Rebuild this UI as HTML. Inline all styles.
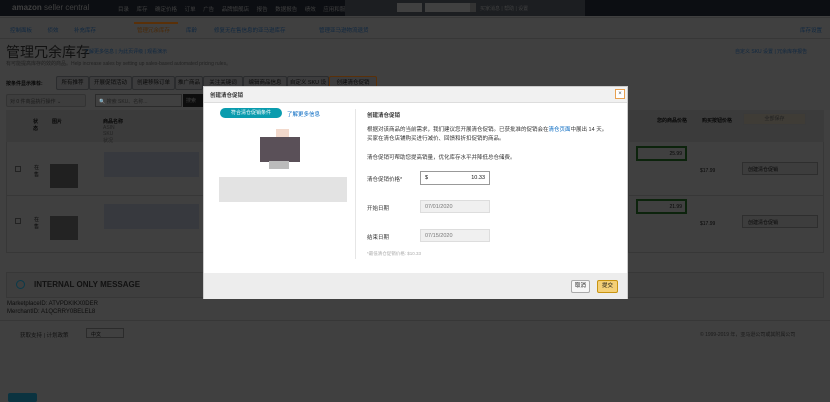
<!DOCTYPE html>
<html><head><meta charset="utf-8"><style>
*{margin:0;padding:0;box-sizing:border-box}
body{width:830px;height:402px;overflow:hidden;position:relative;background:#404040;font-family:"Liberation Sans","Noto Sans CJK SC",sans-serif;font-size:6px;color:#060606}
.a{position:absolute}
.btn{position:absolute;top:76px;height:14px;border:1px solid #2b2c2e;background:#3c3c3d;border-radius:2px;font-size:5.5px;line-height:12px;text-align:center;color:#0a0a0a}
.m{position:absolute;left:203px;top:86px;width:425px;height:213px;background:#fff;border:1px solid #ccc;color:#111}
.lnk{color:#0066c0}
.dl{color:#0e2740}
</style></head><body>
<div class="a" style="left:0;top:0;width:830px;height:16px;background:#0c0e12"></div>
<div class="a" style="left:12px;top:3px;font-size:8px;color:#404040;font-weight:bold">amazon <span style="font-weight:normal">seller central</span></div>
<div class="a" style="left:118px;top:5px;font-size:5.5px;color:#404040;word-spacing:6px">目录 库存 确定价格 订单 广告 品牌旗舰店 报告 数据报告 绩效 应用和服务 B2B</div>
<div class="a" style="left:345px;top:0;width:240px;height:16px;background:#1c1e21"></div>
<div class="a" style="left:397px;top:3px;width:25px;height:9px;background:#404040"></div>
<div class="a" style="left:425px;top:3px;width:45px;height:9px;background:#404040"></div>
<div class="a" style="left:470px;top:3px;width:6px;height:9px;background:#333"></div>
<div class="a" style="left:480px;top:5px;font-size:5px;color:#404040">买家消息 | 帮助 | 设置</div>
<div class="a" style="left:0;top:17px;width:830px;height:1px;background:#373737"></div>
<div class="a dl" style="left:10px;top:26px;font-size:5.5px;word-spacing:14px">控制面板 侦效 补充库存</div>
<div class="a" style="left:134px;top:22px;width:44px;height:14px;border-top:2px solid #5a3008;background:#404040"></div>
<div class="a" style="left:137px;top:26px;font-size:5.5px;color:#4a2806">管理冗余库存</div>
<div class="a dl" style="left:186px;top:26px;font-size:5.5px">库龄</div>
<div class="a dl" style="left:214px;top:26px;font-size:5.5px">修复无在售信息的亚马逊库存</div>
<div class="a dl" style="left:319px;top:26px;font-size:5.5px">管理亚马逊物流退货</div>
<div class="a dl" style="left:800px;top:26px;font-size:5.5px">库存设置</div>
<div class="a" style="left:0;top:38px;width:830px;height:1px;background:#373737"></div>
<div class="a" style="left:6px;top:42px;font-size:14px;color:#111">管理冗余库存</div>
<div class="a dl" style="left:84px;top:48px;font-size:5px">了解更多信息 | 为此页评级 | 观看演示</div>
<div class="a" style="left:6px;top:60px;font-size:5px;color:#222">有可能提高库存的效的商品。Help increase sales by setting up sales-based automated pricing rules。</div>
<div class="a dl" style="left:735px;top:48px;font-size:5px">自定义 SKU 设置 | 冗余库存报告</div>
<div class="a" style="left:6px;top:80px;font-size:5px;font-weight:bold">按条件显示推荐:</div>
<div class="btn" style="left:56px;width:33px">所有推荐</div>
<div class="btn" style="left:89px;width:43px">开展促销活动</div>
<div class="btn" style="left:132px;width:43px">创建移除订单</div>
<div class="btn" style="left:175px;width:28px">推广商品</div>
<div class="btn" style="left:203px;width:40px">关注关键词</div>
<div class="btn" style="left:243px;width:44px">编辑商品信息</div>
<div class="btn" style="left:287px;width:42px">自定义 SKU 设置</div>
<div class="btn" style="left:329px;width:48px;border:1px solid #5a3008">创建清仓促销</div>
<div class="a" style="left:6px;top:94px;width:80px;height:13px;border:1px solid #333;border-radius:2px;background:#3d3d3d;font-size:5px;padding:3px;color:#1a1a1a">对 0 件商品执行操作 ⌄</div>
<div class="a" style="left:95px;top:94px;width:87px;height:13px;border:1px solid #2b2b2b;font-size:5px;color:#222;padding:3px">🔍 搜索 SKU、名称...</div>
<div class="a" style="left:183px;top:94px;width:20px;height:13px;background:#0d0d0d;color:#404040;font-size:5px;padding:3px">搜索</div>
<div class="a" style="left:6px;top:110px;width:198px;height:143px;border:1px solid #373737"></div>
<div class="a" style="left:628px;top:110px;width:196px;height:143px;border:1px solid #373737"></div>
<div class="a" style="left:6px;top:110px;width:818px;height:32px;background:#3b3b3b"></div>
<div class="a" style="left:33px;top:118px;font-size:5px;font-weight:bold">状<br>态</div>
<div class="a" style="left:52px;top:118px;font-size:5px;font-weight:bold">图片</div>
<div class="a" style="left:103px;top:118px;font-size:5px;font-weight:bold">商品名称<br><span style="font-weight:normal;color:#222">ASIN<br>SKU<br>状况</span></div>
<div class="a" style="left:653px;top:117px;font-size:5px;font-weight:bold;text-align:right;width:34px">您的商品价格</div>
<div class="a" style="left:700px;top:117px;font-size:5px;font-weight:bold;width:32px;text-align:right">购买按钮价格</div>
<div class="a" style="left:743px;top:113px;width:63px;height:12px;background:#3f3c36;border:1px solid #3a3a3a;font-size:5px;text-align:center;line-height:10px;color:#222">全部保存</div>
<div class="a" style="left:6px;top:195px;width:818px;height:1px;background:#373737"></div>
<div class="a" style="left:15px;top:166px;width:6px;height:6px;border:1px solid #222"></div>
<div class="a" style="left:15px;top:218px;width:6px;height:6px;border:1px solid #222"></div>
<div class="a" style="left:34px;top:164px;font-size:5px">在<br>售</div>
<div class="a" style="left:34px;top:216px;font-size:5px">在<br>售</div>
<div class="a" style="left:50px;top:164px;width:28px;height:24px;background:#202020"></div>
<div class="a" style="left:50px;top:216px;width:28px;height:24px;background:#232323"></div>
<div class="a" style="left:104px;top:152px;width:95px;height:25px;background:#37393e"></div>
<div class="a" style="left:104px;top:204px;width:95px;height:25px;background:#37393e"></div>
<div class="a" style="left:636px;top:146px;width:51px;height:15px;border:2px solid #0c230c;font-size:5px;padding:3px;text-align:right">25.99</div>
<div class="a" style="left:636px;top:199px;width:51px;height:15px;border:2px solid #0c230c;font-size:5px;padding:3px;text-align:right">21.99</div>
<div class="a" style="left:742px;top:162px;width:76px;height:13px;border:1px solid #2e2e2e;background:#3d3d3d;font-size:5px;padding:3px 5px">创建清仓促销</div>
<div class="a" style="left:742px;top:215px;width:76px;height:13px;border:1px solid #2e2e2e;background:#3d3d3d;font-size:5px;padding:3px 5px">创建清仓促销</div>
<div class="a" style="left:700px;top:168px;font-size:5px">$17.99</div>
<div class="a" style="left:700px;top:221px;font-size:5px">$17.99</div>
<div class="a" style="left:6px;top:272px;width:818px;height:26px;border:1px solid #373737;background:#3e3e3e"></div>
<div class="a" style="left:16px;top:280px;width:9px;height:9px;border:1px solid #0a3a4a;border-radius:50%"></div>
<div class="a" style="left:34px;top:280px;font-size:8px;font-weight:bold;color:#111">INTERNAL ONLY MESSAGE</div>
<div class="a" style="left:7px;top:300px;font-size:6px;line-height:8px;color:#0d0d0d">MarketplaceID: ATVPDKIKX0DER<br>MerchantID: A1QCRRY0BELEL8</div>
<div class="a" style="left:0;top:320px;width:830px;height:1px;background:#373737"></div>
<div class="a" style="left:20px;top:331px;font-size:5.5px;color:#111">获取支持 | 计划政策</div>
<div class="a" style="left:86px;top:328px;width:38px;height:10px;border:1px solid #2b2b2b;font-size:5px;padding:2px 4px">中文</div>
<div class="a" style="left:700px;top:331px;font-size:5px;color:#1a1a1a">© 1999-2019 年，亚马逊公司或其附属公司</div>
<div class="a" style="left:8px;top:393px;width:29px;height:9px;background:#0b3340;border-radius:2px"></div>
<div class="m">
 <div class="a" style="left:0;top:0;width:423px;height:16px;background:#f1f1f1;border-bottom:1px solid #ddd"></div>
 <div class="a" style="left:6px;top:4px;font-size:5.5px;font-weight:bold;color:#333">创建清仓促销</div>
 <div class="a" style="left:411px;top:2px;width:10px;height:10px;border:1px solid #e8a050;background:#fff;font-size:6px;text-align:center;line-height:8px;color:#555">×</div>
 <div class="a" style="left:16px;top:21px;width:62px;height:10px;border-radius:5px;background:#0a9cae;color:#fff;font-size:5px;text-align:center;line-height:10px">符合清仓促销条件</div>
 <div class="a lnk" style="left:83px;top:23px;font-size:5.5px">了解更多信息</div>
 <div class="a" style="left:72px;top:42px;width:13px;height:9px;background:#f2d9cc"></div>
 <div class="a" style="left:56px;top:50px;width:40px;height:25px;background:#5a5058"></div>
 <div class="a" style="left:65px;top:74px;width:20px;height:8px;background:#bbb"></div>
 <div class="a" style="left:15px;top:90px;width:128px;height:25px;background:#e3e3e3"></div>
 <div class="a" style="left:151px;top:22px;width:1px;height:150px;background:#e6e6e6"></div>
 <div class="a" style="left:163px;top:24px;font-size:5.5px;font-weight:bold;color:#333">创建清仓促销</div>
 <div class="a" style="left:163px;top:39px;font-size:5.5px;line-height:9px;color:#333">根据对该商品的当前需求，我们建议您开展清仓促销。已获批准的促销会在<span class="lnk">清仓页面</span>中展出 14 天。<br>买家在清仓店铺购买进行减价、回馈和折扣促销的商品。</div>
 <div class="a" style="left:163px;top:66px;font-size:5.5px;color:#333">清仓促销可帮助您提高销量，优化库存水平并降低总仓储费。</div>
 <div class="a" style="left:163px;top:88px;font-size:5.5px;color:#333">清仓促销价格*</div>
 <div class="a" style="left:216px;top:84px;width:70px;height:14px;border:1px solid #999;font-size:5.5px;padding:3px 4px">$<span style="float:right">10.33</span></div>
 <div class="a" style="left:163px;top:117px;font-size:5.5px;color:#333">开始日期</div>
 <div class="a" style="left:216px;top:113px;width:70px;height:13px;border:1px solid #ddd;background:#f0f0f0;font-size:5.5px;color:#777;padding:3px 4px">07/01/2020</div>
 <div class="a" style="left:163px;top:146px;font-size:5.5px;color:#333">结束日期</div>
 <div class="a" style="left:216px;top:142px;width:70px;height:13px;border:1px solid #ddd;background:#f0f0f0;font-size:5.5px;color:#777;padding:3px 4px">07/15/2020</div>
 <div class="a" style="left:163px;top:164px;font-size:4.5px;color:#aaa">*最低清仓促销价格: $10.33</div>
 <div class="a" style="left:0;top:186px;width:423px;height:26px;background:#ededed"></div>
 <div class="a" style="left:367px;top:193px;width:19px;height:13px;border:1px solid #aaa;background:#f7f7f7;border-radius:2px;font-size:5.5px;text-align:center;line-height:11px">取消</div>
 <div class="a" style="left:393px;top:193px;width:21px;height:13px;border:1px solid #c89411;background:#f4d078;border-radius:2px;font-size:5.5px;text-align:center;line-height:11px">提交</div>
</div>
</body></html>
